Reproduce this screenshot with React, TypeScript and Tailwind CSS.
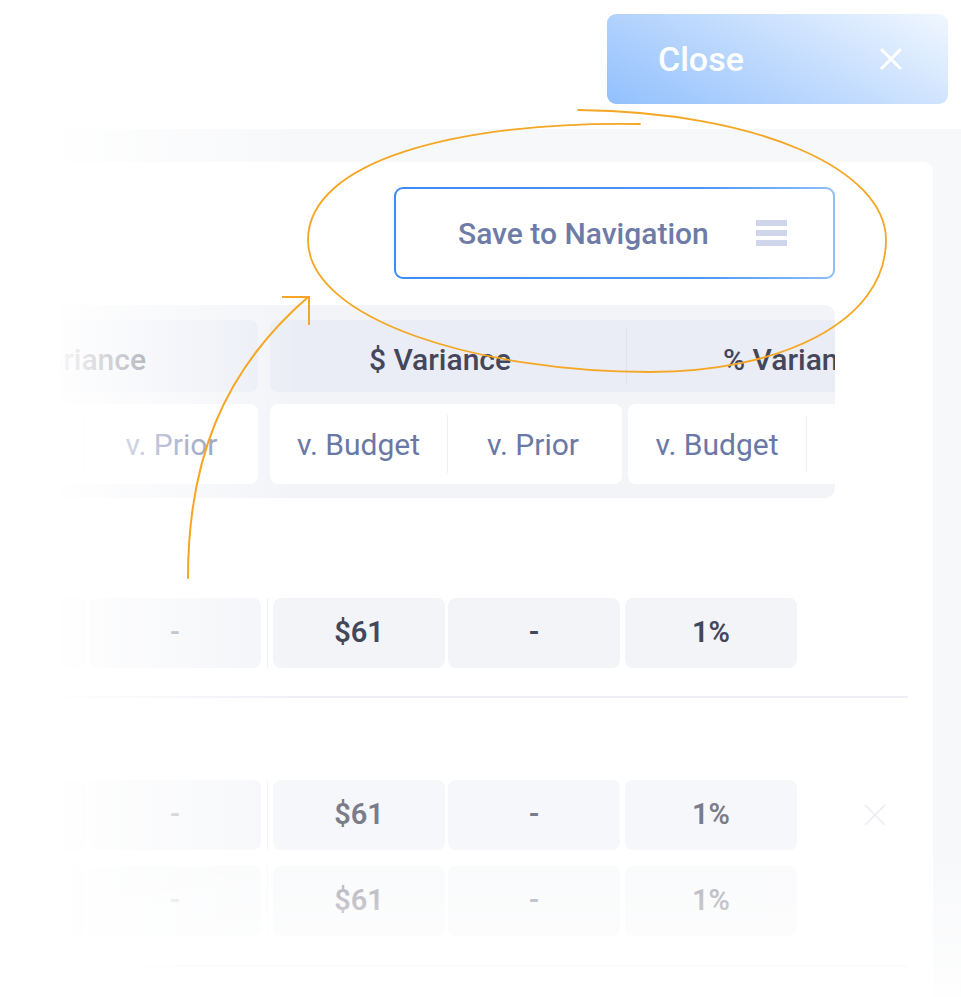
import React from 'react'

const ink = 'text-[#44465a]'

const DataRow: React.FC<{ faded?: string; showX?: boolean }> = ({ faded = '', showX }) => {
    return (
        <div className={`flex h-[70px] items-stretch ${faded}`}>
            <div className='w-[25px] rounded-r-[8px] bg-[#f3f4f8]' />
            <div className='ml-[3px] w-[172px] rounded-[8px] bg-[#f3f4f8] flex items-center justify-center text-[29px] font-medium text-[#8d8f9b]'>-</div>
            <div className='ml-[6px] w-[1px] bg-[#eceef4]' />
            <div className={`ml-[5px] w-[172px] rounded-[8px] bg-[#f3f4f8] flex items-center justify-center text-[29px] font-semibold ${ink}`}>$61</div>
            <div className={`ml-[3px] w-[172px] rounded-[8px] bg-[#f3f4f8] flex items-center justify-center text-[29px] font-semibold ${ink}`}>-</div>
            <div className={`ml-[5px] w-[172px] rounded-[8px] bg-[#f3f4f8] flex items-center justify-center text-[29px] font-semibold ${ink}`}>1%</div>
            {showX && (
                <div className='ml-[67px] flex items-center'>
                    <svg width='22' height='22' viewBox='0 0 22 22' fill='none' stroke='#e3e5ee' strokeWidth='1.6'>
                        <path d='M1 1 L21 21 M21 1 L1 21' />
                    </svg>
                </div>
            )}
        </div>
    )
}

const App: React.FC = () => {
    return (
        <div className="relative w-[961px] h-[997px] overflow-hidden bg-white font-['Roboto',sans-serif]">
            {/* close bar */}
            <div className='h-[129px] flex justify-end items-start pt-[14px] pr-[13px]'>
                <div className='w-[341px] h-[90px] rounded-[9px] bg-[linear-gradient(28deg,#92c0fd_0%,#bcd8fd_45%,#f1f7ff_100%)] flex items-center pl-[51px] pr-[45px]'>
                    <span className='text-[34px] font-medium text-white'>Close</span>
                    <svg className='ml-auto' width='24' height='24' viewBox='0 0 24 24' fill='none' stroke='white' strokeWidth='3'>
                        <path d='M2 2 L22 22 M22 2 L2 22' />
                    </svg>
                </div>
            </div>

            {/* panel */}
            <div className='ml-[61px] h-[868px] bg-[#f7f8fa] pt-[33px] pr-[28px]'>
                <div className='h-full bg-white rounded-tr-[10px] pt-[25px]'>
                    <div className='flex justify-end pr-[98px]'>
                        <div className='w-[441px] h-[92px] rounded-[9px] p-[2px] bg-[linear-gradient(90deg,#3c8cf7_0%,#4c97f8_70%,#8fbff9_100%)]'>
                            <div className='h-full rounded-[7px] bg-white flex items-center pl-[62px] pr-[46px]'>
                                <span className='text-[30px] font-medium text-[#6e7ba7]'>Save to Navigation</span>
                                <div className='ml-auto flex flex-col gap-[4px]'>
                                    <div className='w-[31px] h-[6px] bg-[#cfd5ea]' />
                                    <div className='w-[31px] h-[6px] bg-[#cfd5ea]' />
                                    <div className='w-[31px] h-[6px] bg-[#cfd5ea]' />
                                </div>
                            </div>
                        </div>
                    </div>

                    {/* header group */}
                    <div className='mt-[26px] w-[774px] rounded-r-[10px] bg-[#f3f4f8] pt-[15px] pb-[14px] overflow-hidden'>
                        <div className='flex h-[72px]'>
                            <div className='w-[197px] shrink-0 rounded-r-[8px] bg-[#eaedf5] flex items-center justify-end pr-[112px] pt-[6px]'>
                                <span className={`whitespace-nowrap text-[30px] font-medium ${ink}`}>Variance</span>
                            </div>
                            <div className='ml-[12px] flex-1 rounded-l-[8px] bg-[#eaedf5] flex items-center'>
                                <div className='w-[356px] shrink-0 flex justify-center pr-[16px] pt-[6px]'>
                                    <span className={`whitespace-nowrap text-[30px] font-medium ${ink}`}>$ Variance</span>
                                </div>
                                <div className='w-[1px] h-[58px] bg-[#e0e3ec]' />
                                <div className='pl-[96px] pt-[6px] whitespace-nowrap'>
                                    <span className={`text-[30px] font-medium ${ink}`}>% Variance</span>
                                </div>
                            </div>
                        </div>
                        <div className='mt-[12px] flex h-[80px]'>
                            <div className='w-[197px] shrink-0 rounded-r-[8px] bg-white flex items-center'>
                                <div className='ml-[23px] w-[1px] h-[58px] bg-[#eef0f5]' />
                                <div className='flex-1 text-center text-[30px] text-[#6a78a6]'>v. Prior</div>
                            </div>
                            <div className='ml-[12px] w-[352px] shrink-0 rounded-[8px] bg-white flex items-center'>
                                <div className='w-[177px] text-center text-[30px] text-[#6a78a6]'>v. Budget</div>
                                <div className='w-[1px] h-[58px] bg-[#eef0f5]' />
                                <div className='flex-1 text-center text-[30px] text-[#6a78a6] pr-[4px]'>v. Prior</div>
                            </div>
                            <div className='ml-[6px] flex-1 rounded-l-[8px] bg-white flex items-center'>
                                <div className='w-[178px] text-center text-[30px] text-[#6a78a6]'>v. Budget</div>
                                <div className='w-[1px] h-[58px] bg-[#eef0f5]' />
                            </div>
                        </div>
                    </div>

                    {/* data rows */}
                    <div className='mt-[100px]'>
                        <DataRow />
                    </div>
                    <div className='mt-[28px] w-[847px] h-[2px] bg-[#efeff7]' />
                    <div className='mt-[82px]'>
                        <DataRow faded='opacity-[0.7]' showX />
                    </div>
                    <div className='mt-[16px]'>
                        <DataRow faded='opacity-[0.45]' />
                    </div>
                    <div className='mt-[29px] w-[847px] h-[2px] bg-[#f6f6fa]' />
                </div>
            </div>

            {/* fades */}
            <div className='pointer-events-none absolute left-0 top-[100px] w-[300px] h-[897px] bg-[linear-gradient(to_right,#ffffff_16%,rgba(255,255,255,0.7)_42%,rgba(255,255,255,0)_100%)]' />
            <div className='pointer-events-none absolute left-0 bottom-0 w-full h-[150px] bg-[linear-gradient(to_bottom,rgba(255,255,255,0)_0%,rgba(255,255,255,0.85)_100%)]' />

            {/* annotation */}
            <svg className='pointer-events-none absolute left-0 top-0' width='961' height='997' viewBox='0 0 961 997' fill='none' stroke='#f5a623' strokeWidth='2' strokeLinecap='round'>
                <path d='M578 110 C760 112 886 170 886 240 C886 322 780 372 650 372 C480 372 308 320 308 240 C308 160 460 121 640 124' strokeWidth='1.8' />
                <path d='M188 578 C188 462 222 372 307 298' />
                <path d='M282 297 L309 297 L309 325' strokeLinecap='butt' />
            </svg>
        </div>
    )
}

export default App
